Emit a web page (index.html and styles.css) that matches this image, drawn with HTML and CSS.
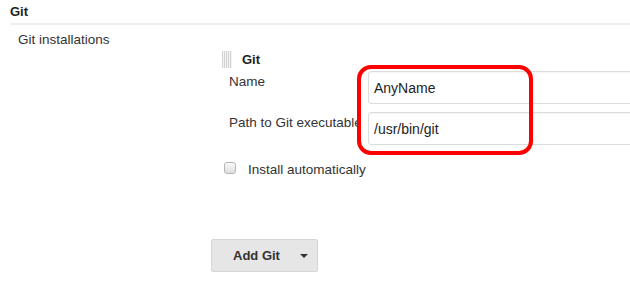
FILE: index.html
```html
<!DOCTYPE html>
<html lang="en">
<head>
    <meta charset="UTF-8">
    <meta name="viewport" content="width=device-width, initial-scale=1.0">
    <title>Git tool configuration</title>
    <link rel="stylesheet" href="styles.css">
</head>
<body>
    <div class="section-title">Git</div>

    <div class="section-body">
        <div class="section-label">Git installations</div>

        <div class="repeated">
            <div class="repeat-head">
                <span class="handle"></span>
                <span class="repeat-name">Git</span>
            </div>

            <div class="fields">
                <label class="field-label" for="git-name">Name</label>
                <input class="field-input" id="git-name" type="text" value="AnyName">

                <label class="field-label" for="git-path">Path to Git executable</label>
                <input class="field-input" id="git-path" type="text" value="/usr/bin/git">

                <div class="highlight"></div>
            </div>

            <div class="checkbox-row">
                <input type="checkbox" id="install-auto" class="check">
                <label for="install-auto">Install automatically</label>
            </div>

            <button class="add-btn" type="button">
                <span>Add Git</span>
                <span class="caret"></span>
            </button>
        </div>
    </div>
</body>
</html>
```

FILE: styles.css
```css
html {
    overflow: hidden;
}

body {
    margin: 0;
    font-family: 'Liberation Sans', Arial, sans-serif;
    font-size: 13.5px;
    color: #333;
    background: #fff;
}

.section-title {
    margin-left: 10px;
    padding: 4px 0 3px;
    line-height: 16px;
    font-size: 13px;
    font-weight: bold;
    color: #222;
    border-bottom: 2px solid #eee;
}

.section-body {
    display: grid;
    grid-template-columns: 211px 1fr;
}

.section-label {
    padding: 7px 0 0 18px;
    line-height: 15px;
}

.repeated {
    padding-top: 25px;
}

.repeat-head {
    display: flex;
    align-items: center;
    gap: 10px;
    margin-left: 11px;
    height: 18px;
}

.handle {
    width: 10px;
    height: 17px;
    background: repeating-linear-gradient(90deg, #d4d4d4 0 1px, #f2f2f2 1px 2px);
}

.repeat-name {
    font-size: 13px;
    font-weight: bold;
    color: #222;
}

.fields {
    position: relative;
    display: grid;
    grid-template-columns: 129px 1fr;
    column-gap: 10px;
    row-gap: 8px;
    margin: 3px 0 0 18px;
}

.field-label {
    padding-top: 3px;
    line-height: 15px;
    white-space: nowrap;
    overflow: hidden;
}

.field-input {
    box-sizing: border-box;
    width: calc(100% + 20px);
    height: 33px;
    padding: 0 5px;
    border: 1px solid #dcdcdc;
    border-radius: 3px;
    font-family: inherit;
    font-size: 14px;
    color: #222;
    background: #fff;
    box-shadow: inset 0 1px 1px rgba(0, 0, 0, 0.04);
}

.highlight {
    position: absolute;
    left: 128px;
    top: -6px;
    width: 176px;
    height: 90px;
    box-sizing: border-box;
    border: 4px solid #f00;
    border-radius: 14px;
    pointer-events: none;
}

.checkbox-row {
    display: flex;
    align-items: flex-start;
    gap: 12px;
    margin: 17px 0 0 13px;
    line-height: 15px;
}

.check {
    appearance: none;
    margin: 0;
    width: 12px;
    height: 12px;
    border: 1px solid #b5b5b5;
    border-radius: 3px;
    background: linear-gradient(#fafafa, #dedede);
}

.add-btn {
    display: inline-flex;
    align-items: center;
    gap: 20px;
    height: 33px;
    margin-top: 62px;
    padding: 0 9px 0 21px;
    border: 1px solid #d6d6d6;
    border-radius: 2px;
    background: #e6e6e6;
    font-family: inherit;
    font-size: 13px;
    font-weight: bold;
    color: #333;
}

.caret {
    width: 0;
    height: 0;
    border-left: 4px solid transparent;
    border-right: 4px solid transparent;
    border-top: 4px solid #333;
}
```
